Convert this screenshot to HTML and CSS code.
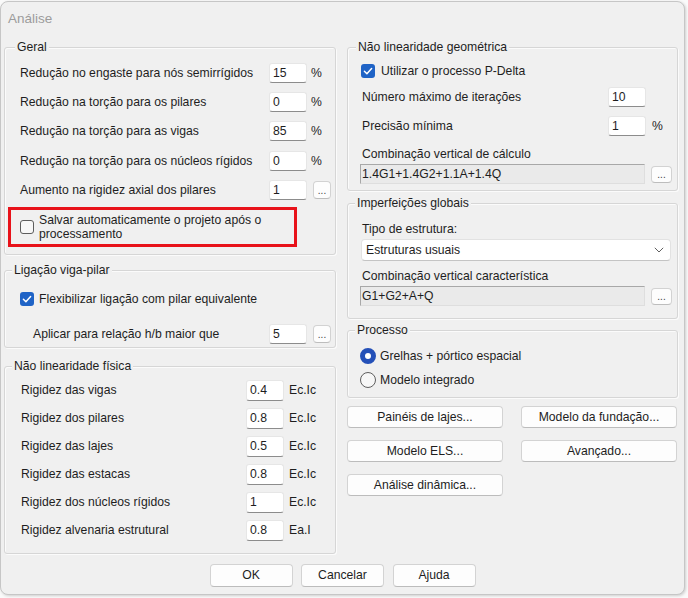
FILE: index.html
```html
<!DOCTYPE html>
<html lang="pt">
<head>
<meta charset="utf-8">
<title>Análise</title>
<link rel="stylesheet" href="styles.css">
</head>
<body>
<div class="dialog">
  <div class="title">Análise</div>
  <div class="cols">
    <div class="col">
      <section class="group g-geral">
        <div class="legend lg-geral">Geral</div>
        <div class="rows rows-geral">
          <div class="row row-g"><span class="lbl">Redução no engaste para nós semirrígidos</span><span class="input">15</span><span class="unit">%</span></div>
          <div class="row row-g"><span class="lbl">Redução na torção para os pilares</span><span class="input">0</span><span class="unit">%</span></div>
          <div class="row row-g"><span class="lbl">Redução na torção para as vigas</span><span class="input">85</span><span class="unit">%</span></div>
          <div class="row row-g"><span class="lbl">Redução na torção para os núcleos rígidos</span><span class="input">0</span><span class="unit">%</span></div>
          <div class="row row-g"><span class="lbl">Aumento na rigidez axial dos pilares</span><span class="input">1</span><span class="dots dots-sq">...</span></div>
        </div>
        <div class="highlight">
          <span class="box"></span>
          <span class="ctext">Salvar automaticamente o projeto após o processamento</span>
        </div>
      </section>

      <section class="group g-lig">
        <div class="legend">Ligação viga-pilar</div>
        <div class="checkrow cr-lig"><span class="box checked"><svg viewBox="0 0 14 14" width="14" height="14"><path d="M3.4 7.2 L5.9 9.7 L10.6 4.6" fill="none" stroke="#fff" stroke-width="1.5" stroke-linecap="round" stroke-linejoin="round"/></svg></span><span>Flexibilizar ligação com pilar equivalente</span></div>
        <div class="row row-apl"><span class="lbl">Aplicar para relação h/b maior que</span><span class="input">5</span><span class="dots dots-sq">...</span></div>
      </section>

      <section class="group g-nlf">
        <div class="legend">Não linearidade física</div>
        <div class="rows rows-nlf">
          <div class="row row-f"><span class="lbl">Rigidez das vigas</span><span class="input">0.4</span><span class="unit">Ec.Ic</span></div>
          <div class="row row-f"><span class="lbl">Rigidez dos pilares</span><span class="input">0.8</span><span class="unit">Ec.Ic</span></div>
          <div class="row row-f"><span class="lbl">Rigidez das lajes</span><span class="input">0.5</span><span class="unit">Ec.Ic</span></div>
          <div class="row row-f"><span class="lbl">Rigidez das estacas</span><span class="input">0.8</span><span class="unit">Ec.Ic</span></div>
          <div class="row row-f"><span class="lbl">Rigidez dos núcleos rígidos</span><span class="input">1</span><span class="unit">Ec.Ic</span></div>
          <div class="row row-f"><span class="lbl">Rigidez alvenaria estrutural</span><span class="input">0.8</span><span class="unit">Ea.I</span></div>
        </div>
      </section>
    </div>

    <div class="col">
      <section class="group g-nlg">
        <div class="legend lg-nlg">Não linearidade geométrica</div>
        <div class="checkrow cr-nlg"><span class="box checked"><svg viewBox="0 0 14 14" width="14" height="14"><path d="M3.4 7.2 L5.9 9.7 L10.6 4.6" fill="none" stroke="#fff" stroke-width="1.5" stroke-linecap="round" stroke-linejoin="round"/></svg></span><span>Utilizar o processo P-Delta</span></div>
        <div class="row row-r r-iter"><span class="lbl">Número máximo de iterações</span><span class="input">10</span><span class="unit"></span></div>
        <div class="row row-r r-prec"><span class="lbl">Precisão mínima</span><span class="input">1</span><span class="unit unit-r">%</span></div>
        <div class="flabel fl-calc">Combinação vertical de cálculo</div>
        <div class="fieldrow"><span class="field">1.4G1+1.4G2+1.1A+1.4Q</span><span class="dots dots-w">...</span></div>
      </section>

      <section class="group g-imp">
        <div class="legend">Imperfeições globais</div>
        <div class="flabel fl-tipo">Tipo de estrutura:</div>
        <div class="select"><span>Estruturas usuais</span><svg class="chev" viewBox="0 0 10 6" width="10" height="6"><path d="M0.8 0.8 L5 5 L9.2 0.8" fill="none" stroke="#606060" stroke-width="1"/></svg></div>
        <div class="flabel fl-car">Combinação vertical característica</div>
        <div class="fieldrow"><span class="field">G1+G2+A+Q</span><span class="dots dots-w">...</span></div>
      </section>

      <section class="group g-proc">
        <div class="legend">Processo</div>
        <div class="radiorow rr-1"><span class="radio on"></span><span>Grelhas + pórtico espacial</span></div>
        <div class="radiorow rr-2"><span class="radio"></span><span>Modelo integrado</span></div>
      </section>

      <div class="btngrid">
        <button class="btn">Painéis de lajes...</button>
        <button class="btn">Modelo da fundação...</button>
        <button class="btn">Modelo ELS...</button>
        <button class="btn">Avançado...</button>
        <button class="btn">Análise dinâmica...</button>
      </div>
    </div>
  </div>
  <div class="footer">
    <button class="btn fbtn">OK</button>
    <button class="btn fbtn">Cancelar</button>
    <button class="btn fbtn">Ajuda</button>
  </div>
</div>
</body>
</html>
```

FILE: styles.css
```css
html, body {
  margin: 0;
  padding: 0;
}
body {
  background: #fafafa;
  font-family: "Liberation Sans", Arial, sans-serif;
  font-size: 12.2px;
  color: #1e1e1e;
  width: 688px;
  height: 598px;
  overflow: hidden;
}
.dialog {
  box-sizing: border-box;
  margin-top: 1px;
  width: 685px;
  height: 594px;
  background: #f0f0f0;
  border: 1px solid #c6c6c6;
  border-radius: 8px;
  box-shadow: 1px 1px 3px rgba(0, 0, 0, 0.18);
}
.title {
  height: 38px;
  line-height: 34px;
  padding-left: 7px;
  font-size: 13.5px;
  color: #9c9c9c;
}
.cols {
  display: grid;
  grid-template-columns: 332px 331px;
  column-gap: 11px;
  padding-left: 3px;
  align-items: start;
}
.col {
  display: flex;
  flex-direction: column;
}

/* group boxes */
.group {
  border: 1px solid #d6d6d6;
  border-radius: 3px;
  box-shadow: inset 1px 1px 0 #fbfbfb, 1px 1px 0 #fbfbfb;
}
.legend {
  width: fit-content;
  margin: -8px 0 0 7px;
  padding: 0 2px;
  line-height: 14px;
  height: 14px;
  background: #f0f0f0;
  white-space: nowrap;
}
.lg-geral { margin-left: 10px; }
.lg-nlg { margin-left: 8px; }

.g-geral { margin-top: 7px; padding-bottom: 7px; }
.g-lig { margin-top: 15px; padding-bottom: 3px; }
.g-nlf { margin-top: 18px; padding-bottom: 12px; }
.g-nlg { margin-top: 7px; padding-bottom: 6px; }
.g-imp { margin-top: 12px; padding-bottom: 12px; }
.g-proc { margin-top: 11px; padding-bottom: 7px; }

/* rows */
.rows {
  display: flex;
  flex-direction: column;
}
.row {
  display: grid;
  align-items: center;
  height: 20px;
}
.lbl { white-space: nowrap; }
.rows-geral {
  padding: 9px 0 0 15px;
  gap: 9.2px;
}
.row-g, .row-apl {
  grid-template-columns: 1fr 38px 28px;
}
.row-apl {
  margin-top: 15px;
  padding-left: 28px;
}
.rows-nlf {
  padding: 7px 0 0 16px;
  gap: 7px;
}
.row-f {
  grid-template-columns: 1fr 38px 51px;
  height: 21px;
}
.row-f .input { height: 21px; line-height: 19px; }
.row-f .unit { padding-left: 5px; }
.row-r {
  grid-template-columns: 1fr 38px 31px;
  padding-left: 14px;
}
.r-iter { margin-top: 6px; }
.r-prec { margin-top: 9px; }
.unit { padding-left: 4px; }
.unit-r { padding-left: 6px; }

.input {
  box-sizing: border-box;
  height: 20px;
  background: #ffffff;
  border: 1px solid #e6e6e6;
  border-bottom: 1px solid #8c8c8c;
  border-radius: 3px;
  padding-left: 3px;
  line-height: 18px;
}

.dots {
  box-sizing: border-box;
  display: flex;
  align-items: flex-end;
  justify-content: center;
  background: #fdfdfd;
  border: 1px solid #d2d2d2;
  border-bottom-color: #bdbdbd;
  border-radius: 4px;
  font-size: 10px;
  line-height: 10px;
  color: #444;
  padding-bottom: 2px;
}
.dots-sq {
  width: 18px;
  height: 18px;
  margin-left: 6px;
}
.dots-w {
  width: 21px;
  height: 17px;
  margin-left: 6px;
}

/* checkboxes */
.box {
  box-sizing: border-box;
  flex: none;
  width: 14px;
  height: 14px;
  border: 1px solid #5d5d5d;
  border-radius: 3px;
  background: #f7f7f7;
}
.box.checked {
  border: none;
  background: #1f63c6;
}
.box svg { display: block; }
.checkrow {
  display: flex;
  align-items: center;
  height: 20px;
}
.cr-lig {
  margin-top: 12px;
  padding-left: 15px;
  gap: 5px;
}
.cr-nlg {
  margin-top: 7px;
  padding-left: 13px;
  gap: 6px;
}
.highlight {
  box-sizing: border-box;
  width: 289px;
  margin: 7px 0 0 3px;
  border: 3px solid #e8121a;
  padding: 3px 0 2px 9px;
  display: flex;
  align-items: center;
  gap: 5px;
}
.ctext {
  line-height: 14.5px;
}

/* labels + fields */
.flabel {
  line-height: 14px;
  height: 14px;
  padding-left: 14px;
  white-space: nowrap;
}
.fl-calc { margin-top: 11px; }
.fl-tipo { margin-top: 12px; }
.fl-car { margin-top: 8px; }
.fieldrow {
  display: flex;
  align-items: center;
  margin-top: 3px;
  padding-left: 12px;
}
.field {
  box-sizing: border-box;
  width: 285px;
  height: 20px;
  background: #eaeaea;
  border: 1px solid #dedede;
  border-top-color: #a8a8a8;
  border-left-color: #a8a8a8;
  padding-left: 1px;
  line-height: 18px;
  white-space: nowrap;
}
.select {
  box-sizing: border-box;
  margin: 3px 0 0 13px;
  width: 310px;
  height: 22px;
  background: #ffffff;
  border: 1px solid #e2e2e2;
  border-bottom-color: #c4c4c4;
  border-radius: 4px;
  display: flex;
  align-items: center;
  justify-content: space-between;
  padding: 0 6px 0 4px;
}
.chev { display: block; }

/* radios */
.radiorow {
  display: flex;
  align-items: center;
  gap: 4px;
  height: 20px;
  padding-left: 12px;
}
.rr-1 { margin-top: 9px; }
.rr-2 { margin-top: 4px; }
.radio {
  box-sizing: border-box;
  flex: none;
  width: 16px;
  height: 16px;
  border-radius: 50%;
  border: 1px solid #5f5f5f;
  background: #f7f7f7;
}
.radio.on {
  border: 5px solid #2450b8;
  background: #ffffff;
}

/* buttons */
.btn {
  box-sizing: border-box;
  font-family: "Liberation Sans", Arial, sans-serif;
  font-size: 12.2px;
  color: #1e1e1e;
  background: #fdfdfd;
  border: 1px solid #d3d3d3;
  border-bottom-color: #bcbcbc;
  border-radius: 4px;
  padding: 0;
  height: 22px;
  margin: 0;
}
.btngrid {
  margin-top: 8px;
  display: grid;
  grid-template-columns: 156px 156px;
  column-gap: 18px;
  row-gap: 12px;
}
.footer {
  display: flex;
  justify-content: center;
  gap: 8.5px;
  margin-top: 10px;
}
.fbtn {
  width: 83px;
  height: 23px;
}
```
